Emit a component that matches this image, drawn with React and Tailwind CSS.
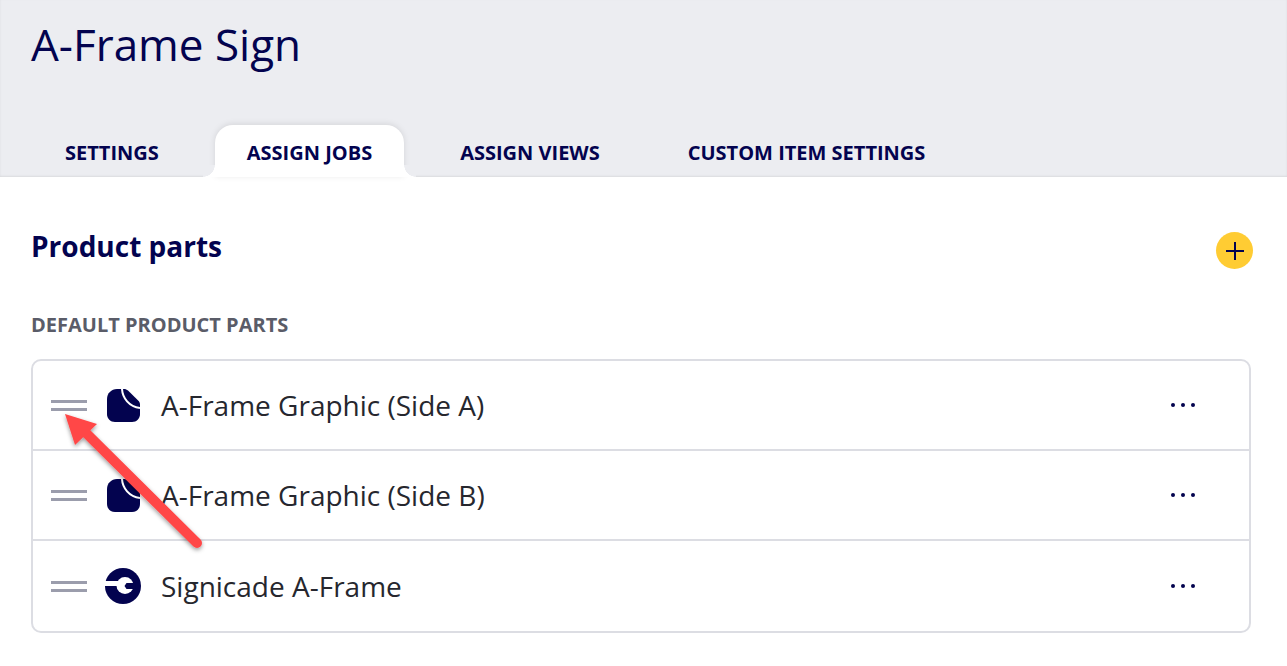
import React from "react";

const navy = "#03034f";

const PartIcon = () => (
  <svg width="33" height="33" viewBox="0 0 33 33" className="shrink-0">
    <path
      d="M10 0h7c1.600 0 2.800.5 4 1.600l10.400 10.200c1 1 1.600 2.200 1.600 3.700V25c0 4.600-3.400 8-8 8H8c-4.600 0-8-3.400-8-8V10C0 4.400 4.400 0 10 0Z"
      fill={navy}
    />
    <path d="M15 0c.5 9 7 17.500 18 19" fill="none" stroke="#fff" strokeWidth="2" />
  </svg>
);

const WrenchIcon = () => (
  <svg width="36" height="36" viewBox="0 0 36 36" className="shrink-0">
    <circle cx="18" cy="18" r="18" fill={navy} />
    <circle cx="20" cy="17.500" r="8.500" fill="#fff" />
    <rect x="0" y="13" width="20" height="5" fill="#fff" />
    <path d="M21.500 15h9v6h-9l-2-3Z" fill={navy} />
  </svg>
);

const parts = [
  { name: "A-Frame Graphic (Side A)", icon: <PartIcon />, height: "h-[88px]" },
  { name: "A-Frame Graphic (Side B)", icon: <PartIcon />, height: "h-[90px]" },
  { name: "Signicade A-Frame", icon: <WrenchIcon />, height: "h-[92px]" },
];

const tabs = ["SETTINGS", "ASSIGN JOBS", "ASSIGN VIEWS", "CUSTOM ITEM SETTINGS"];

export default function App() {
  return (
    <div className="relative h-[666px] w-[1287px] overflow-hidden bg-white font-['Open_Sans',sans-serif]">
      <div className="h-[177px] bg-[#ecedf1] shadow-[inset_0_-1px_2px_rgba(0,0,0,0.08)] flex flex-col">
        <h1 className="pl-[31px] pt-[13px] text-[44px] leading-[62px] font-normal text-[#03034f]">A-Frame Sign</h1>
        <div className="mt-auto flex gap-6 pl-[33px]">
          {tabs.map((t) => (
            <div
              key={t}
              className={`relative h-[52px] px-[32px] pt-[14px] text-[20px] leading-[28px] font-bold text-[#03034f] ${
                t === "ASSIGN JOBS" ? "rounded-t-[18px] bg-white shadow-[0_-1px_6px_rgba(0,0,0,0.1)]" : ""
              }`}
            >
              {t}
              {t === "ASSIGN JOBS" && (
                <>
                  <span className="absolute bottom-0 -left-[12px] h-[12px] w-[12px] bg-[radial-gradient(circle_at_0_0,#ecedf1_11.500px,#ffffff_12px)]" />
                  <span className="absolute bottom-0 -right-[12px] h-[12px] w-[12px] bg-[radial-gradient(circle_at_100%_0,#ecedf1_11.500px,#ffffff_12px)]" />
                </>
              )}
            </div>
          ))}
        </div>
      </div>

      <div className="pl-[31px] pr-[34px]">
        <div className="flex items-start justify-between pt-[49px]">
          <h2 className="text-[28px] leading-[40px] font-bold text-[#03034f]">Product parts</h2>
          <button className="mt-[6px] flex h-[37px] w-[37px] items-center justify-center rounded-full bg-[#ffcc33]">
            <svg width="18" height="18" viewBox="0 0 18 18">
              <path d="M9 0v18M0 9h18" stroke="#03034f" strokeWidth="2" />
            </svg>
          </button>
        </div>

        <div className="mt-[42px] text-[20px] leading-[28px] font-bold text-[#5a5c68]">DEFAULT PRODUCT PARTS</div>

        <div className="mt-[20px] w-[1220px] rounded-[10px] border-2 border-[#dcdde3]">
          {parts.map((p, i) => (
            <div
              key={p.name}
              className={`flex ${p.height} items-center pl-[18px] pr-[54px] ${i > 0 ? "border-t-2 border-[#dcdde3]" : ""}`}
            >
              <div className="flex w-[36px] shrink-0 flex-col gap-[5px]">
                <div className="h-[3px] bg-[#9b9dac]" />
                <div className="h-[3px] bg-[#9b9dac]" />
              </div>
              <div className="ml-[18px] flex w-[36px] justify-center">{p.icon}</div>
              <span className="ml-[20px] text-[28px] leading-[36px] text-[#26272e]">{p.name}</span>
              <div className="ml-auto flex gap-[6px]">
                <div className="h-1 w-1 rounded-full bg-[#03034f]" />
                <div className="h-1 w-1 rounded-full bg-[#03034f]" />
                <div className="h-1 w-1 rounded-full bg-[#03034f]" />
              </div>
            </div>
          ))}
        </div>
      </div>

      <svg className="absolute left-0 top-0 pointer-events-none" width="1287" height="666" viewBox="0 0 1287 666">
        <defs>
          <filter id="arrowShadow" x="-20%" y="-20%" width="140%" height="140%">
            <feDropShadow dx="0" dy="2" stdDeviation="2" floodColor="#000" floodOpacity="0.4" />
          </filter>
        </defs>
        <g filter="url(#arrowShadow)">
          <path d="M197 543 84 431" stroke="#ff4747" strokeWidth="10" strokeLinecap="round" fill="none" />
          <path d="M65 414 97 424 75 445Z" fill="#ff4747" />
        </g>
      </svg>
    </div>
  );
}
